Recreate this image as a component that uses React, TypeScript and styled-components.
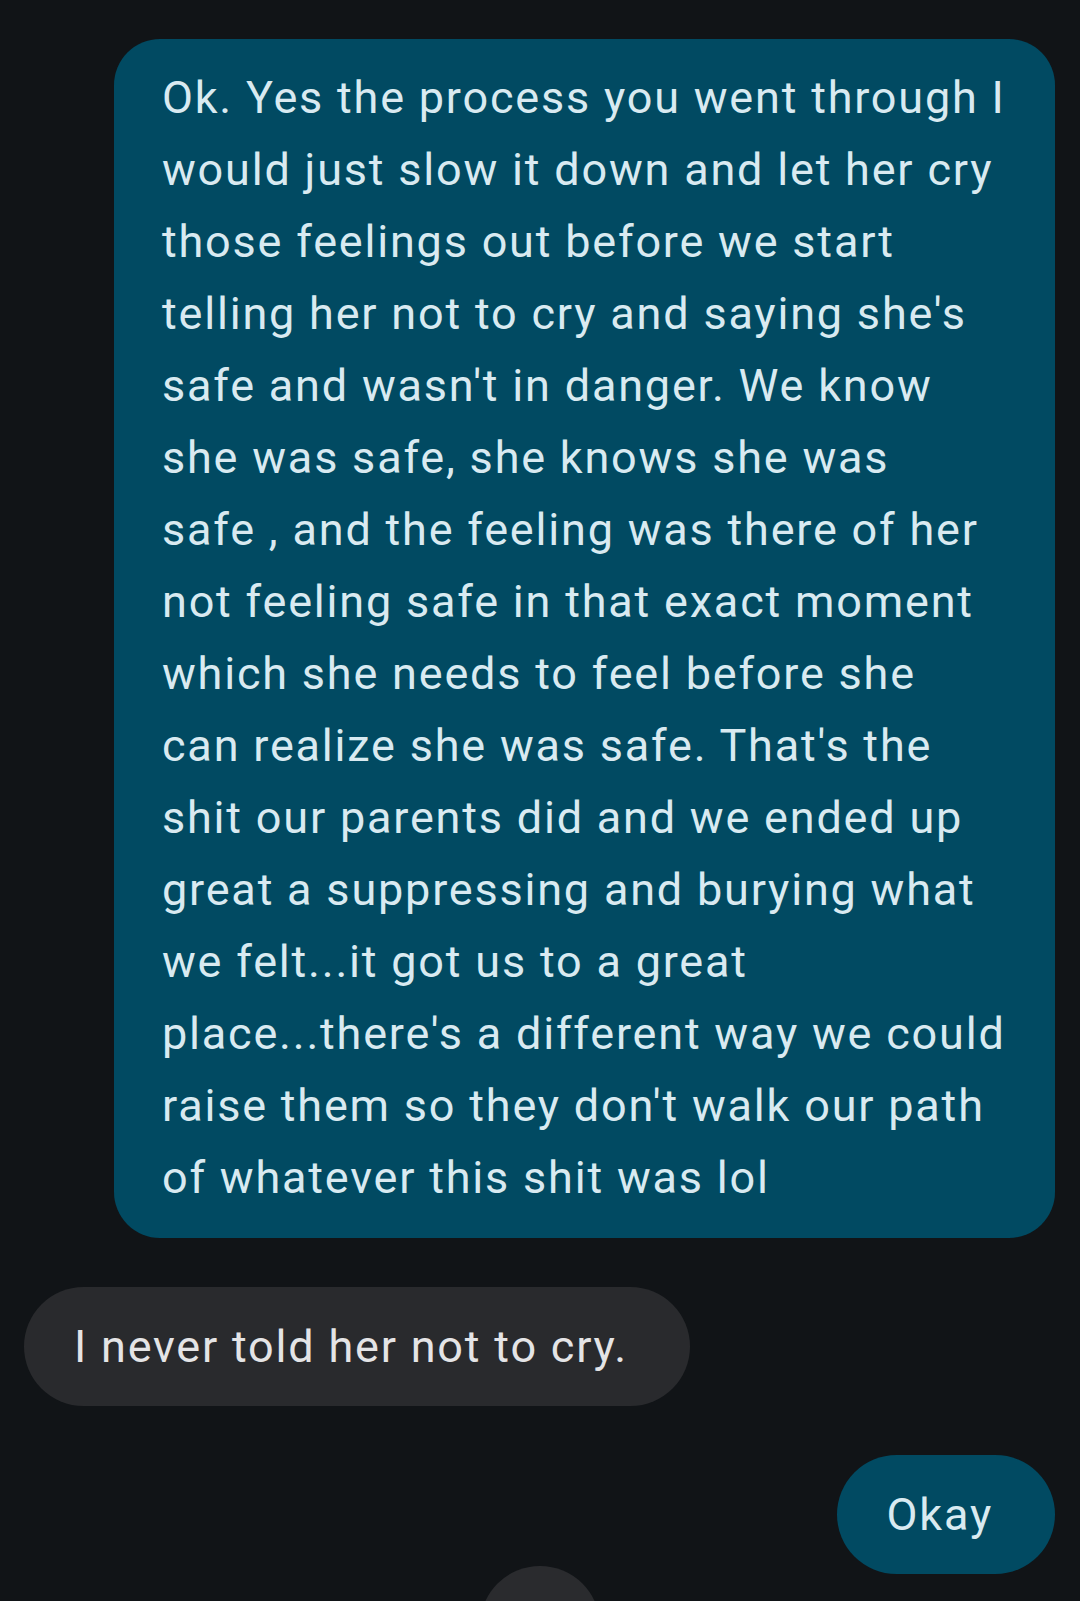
import React from 'react';
import styled, { createGlobalStyle } from 'styled-components';

interface IMessage {
  id: number;
  sender: 'me' | 'other';
  lines: string[];
}

const messages: IMessage[] = [
  {
    id: 1,
    sender: 'me',
    lines: [
      'Ok. Yes the process you went through I',
      'would just slow it down and let her cry',
      'those feelings out before we start',
      "telling her not to cry and saying she's",
      "safe and wasn't in danger. We know",
      'she was safe, she knows she was',
      'safe , and the feeling was there of her',
      'not feeling safe in that exact moment',
      'which she needs to feel before she',
      "can realize she was safe. That's the",
      'shit our parents did and we ended up',
      'great a suppressing and burying what',
      'we felt...it got us to a great',
      "place...there's a different way we could",
      "raise them so they don't walk our path",
      'of whatever this shit was lol',
    ],
  },
  { id: 2, sender: 'other', lines: ['I never told her not to cry.'] },
  { id: 3, sender: 'me', lines: ['Okay'] },
];

const GlobalStyle = createGlobalStyle`
  html, body {
    margin: 0;
    padding: 0;
    background: #111417;
  }
  body {
    font-family: Roboto, "Noto Sans", "Liberation Sans", sans-serif;
  }
`;

const Screen = styled.div`
  position: relative;
  height: 1601px;
  overflow: hidden;
  background: #111417;
`;

const Thread = styled.div`
  display: flex;
  flex-direction: column;
  gap: 49px;
  padding: 39px 25px 0 24px;
`;

const Bubble = styled.div<{ $mine: boolean; $multi: boolean }>`
  align-self: ${({ $mine }) => ($mine ? 'flex-end' : 'flex-start')};
  background: ${({ $mine }) => ($mine ? '#014a62' : '#292a2d')};
  color: ${({ $mine }) => ($mine ? '#d9eaf1' : '#e4e4e6')};
  font-size: 45px;
  letter-spacing: 1.8px;
  white-space: nowrap;
  box-sizing: border-box;
  ${({ $multi }) =>
    $multi
      ? `
    width: 941px;
    padding: 23px 40px 24px 48px;
    border-radius: 46px;
    line-height: 72px;
  `
      : `
    height: 119px;
    display: flex;
    align-items: center;
    padding: 0 62px 0 50px;
    border-radius: 60px;
    line-height: 1;
  `}
`;

const Line = styled.div``;

const JumpButton = styled.div`
  position: absolute;
  left: 480px;
  top: 1566px;
  width: 120px;
  height: 120px;
  border-radius: 50%;
  background: #2a2b2e;
`;

const App: React.FC = () => {
  return (
    <Screen>
      <GlobalStyle />
      <Thread>
        {messages.map((msg) => (
          <Bubble key={msg.id} $mine={msg.sender === 'me'} $multi={msg.lines.length > 1}>
            {msg.lines.length > 1
              ? msg.lines.map((line, i) => <Line key={i}>{line}</Line>)
              : msg.lines[0]}
          </Bubble>
        ))}
      </Thread>
      <JumpButton />
    </Screen>
  );
};

export default App;
